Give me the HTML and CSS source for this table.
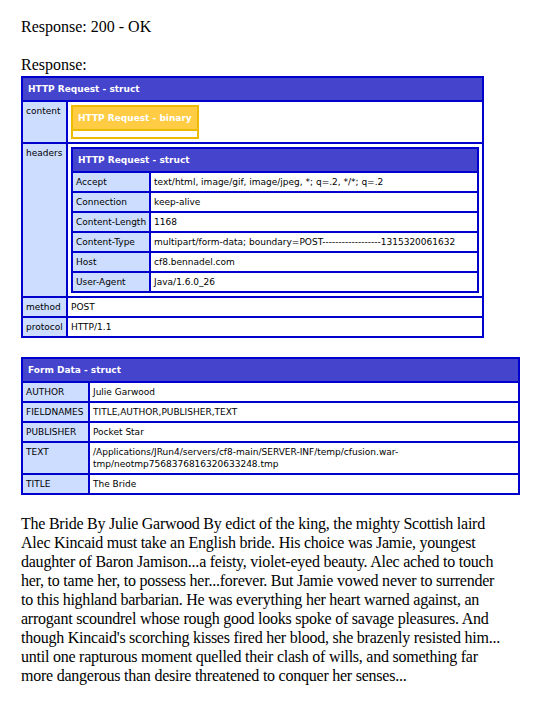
FILE: index.html
```html
<!DOCTYPE html>
<html>
<head>
<meta charset="utf-8">
<title>Response</title>
<link rel="stylesheet" href="styles.css">
</head>
<body>
<div class="status">Response: 200 - OK</div>
<div class="label">Response:</div>
<table class="dump outer">
  <tr><th colspan="2">HTTP Request - struct</th></tr>
  <tr>
    <td class="key outer-key">content</td>
    <td class="val outer-val">
      <table class="dump binary">
        <tr><th>HTTP Request - binary</th></tr>
        <tr><td></td></tr>
      </table>
    </td>
  </tr>
  <tr>
    <td class="key outer-key">headers</td>
    <td class="val outer-val">
      <table class="dump inner">
        <tr><th colspan="2">HTTP Request - struct</th></tr>
        <tr><td class="key inner-key">Accept</td><td class="val inner-val">text/html, image/gif, image/jpeg, *; q=.2, */*; q=.2</td></tr>
        <tr><td class="key inner-key">Connection</td><td class="val inner-val">keep-alive</td></tr>
        <tr><td class="key inner-key">Content-Length</td><td class="val inner-val">1168</td></tr>
        <tr><td class="key inner-key">Content-Type</td><td class="val inner-val">multipart/form-data; boundary=POST------------------1315320061632</td></tr>
        <tr><td class="key inner-key">Host</td><td class="val inner-val">cf8.bennadel.com</td></tr>
        <tr><td class="key inner-key">User-Agent</td><td class="val inner-val">Java/1.6.0_26</td></tr>
      </table>
    </td>
  </tr>
  <tr><td class="key outer-key">method</td><td class="val outer-val">POST</td></tr>
  <tr><td class="key outer-key">protocol</td><td class="val outer-val">HTTP/1.1</td></tr>
</table>

<table class="dump form">
  <tr><th colspan="2">Form Data - struct</th></tr>
  <tr><td class="key form-key">AUTHOR</td><td class="val form-val">Julie Garwood</td></tr>
  <tr><td class="key form-key">FIELDNAMES</td><td class="val form-val">TITLE,AUTHOR,PUBLISHER,TEXT</td></tr>
  <tr><td class="key form-key">PUBLISHER</td><td class="val form-val">Pocket Star</td></tr>
  <tr><td class="key form-key">TEXT</td><td class="val form-val">/Applications/JRun4/servers/cf8-main/SERVER-INF/temp/cfusion.war-<br>tmp/neotmp7568376816320633248.tmp</td></tr>
  <tr><td class="key form-key">TITLE</td><td class="val form-val">The Bride</td></tr>
</table>

<p class="text">The Bride By Julie Garwood By edict of the king, the mighty Scottish laird Alec Kincaid must take an English bride. His choice was Jamie, youngest daughter of Baron Jamison...a feisty, violet-eyed beauty. Alec ached to touch her, to tame her, to possess her...forever. But Jamie vowed never to surrender to this highland barbarian. He was everything her heart warned against, an arrogant scoundrel whose rough good looks spoke of savage pleasures. And though Kincaid's scorching kisses fired her blood, she brazenly resisted him... until one rapturous moment quelled their clash of wills, and something far more dangerous than desire threatened to conquer her senses...</p>
</body>
</html>
```

FILE: styles.css
```css
html, body {
  margin: 0;
  padding: 0;
  background: #ffffff;
}

body {
  padding: 0 21px;
  font-family: "Liberation Serif", "Times New Roman", serif;
  font-size: 16px;
  color: #000000;
}

.status {
  padding-top: 18px;
  line-height: 18px;
}

.label {
  margin-top: 20px;
  line-height: 18px;
}

table.dump {
  border-collapse: separate;
  border-spacing: 2px;
  background-color: #0000cc;
  font-family: "DejaVu Sans", Verdana, sans-serif;
  font-size: 9px;
  line-height: 12px;
  color: #000000;
}

table.dump th {
  text-align: left;
  color: #ffffff;
  background-color: #4444cc;
  padding: 5px;
  font-weight: bold;
  white-space: nowrap;
}

table.dump td {
  background-color: #ffffff;
  padding: 3px;
  vertical-align: top;
  white-space: nowrap;
}

table.dump td.key {
  background-color: #ccddff;
}

table.outer {
  margin-top: 2px;
  width: 463px;
}

td.outer-key { width: 37px; }

table.binary {
  background-color: #eebb00;
  width: 127px;
}

table.binary th {
  background-color: #ffcc44;
}

table.inner {
  width: 408px;
}

td.inner-key { width: 70px; }

table.form {
  margin-top: 19px;
  width: 499px;
}

td.form-key { width: 59px; }

.text {
  margin: 19px 0 0 0;
  width: 484px;
  line-height: 19px;
  letter-spacing: -0.24px;
}
```
